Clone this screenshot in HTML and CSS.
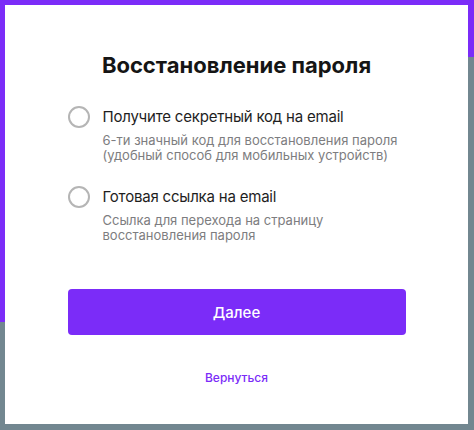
FILE: index.html
```html
<!DOCTYPE html>
<html lang="ru">
<head>
<meta charset="utf-8">
<title>Восстановление пароля</title>
<link rel="stylesheet" href="styles.css">
</head>
<body>
<div class="page">
  <div class="bg-top"></div>
  <div class="bg-left"></div>
  <main class="card">
    <h1 class="title">Восстановление пароля</h1>
    <div class="options">
      <label class="option">
        <span class="radio"></span>
        <span class="option-text">
          <span class="option-label">Получите секретный код на email</span>
          <span class="option-desc">6-ти значный код для восстановления пароля<br>(удобный способ для мобильных устройств)</span>
        </span>
      </label>
      <label class="option">
        <span class="radio"></span>
        <span class="option-text">
          <span class="option-label">Готовая ссылка на email</span>
          <span class="option-desc">Ссылка для перехода на страницу<br>восстановления пароля</span>
        </span>
      </label>
    </div>
    <button class="btn" type="button">Далее</button>
    <a class="back" href="#">Вернуться</a>
  </main>
</div>
</body>
</html>
```
FILE: styles.css
```css
html, body {
  margin: 0;
  padding: 0;
}
body {
  font-family: Inter, "Noto Sans", "DejaVu Sans", sans-serif;
  background: #728790;
}
.page {
  position: relative;
  width: 474px;
  height: 430px;
  overflow: hidden;
  background: #728790;
}
.bg-top {
  position: absolute;
  left: 0;
  top: 0;
  width: 474px;
  height: 57px;
  background: #7b2cf8;
}
.bg-left {
  position: absolute;
  left: 0;
  top: 0;
  width: 40px;
  height: 322px;
  background: #7b2cf8;
  border-bottom-right-radius: 8px;
}
.card {
  position: relative;
  box-sizing: border-box;
  margin: 5px 6px 0 5px;
  height: 419px;
  background: #fff;
  padding-top: 46px;
  display: flex;
  flex-direction: column;
  align-items: center;
}
.title {
  margin: 0;
  font-size: 22px;
  line-height: 28px;
  font-weight: 700;
  color: #151515;
  letter-spacing: 0;
}
.options {
  width: 338px;
  margin-top: 27px;
  display: flex;
  flex-direction: column;
  gap: 23px;
}
.option {
  display: grid;
  grid-template-columns: 22px 1fr;
  column-gap: 13px;
  cursor: pointer;
}
.radio {
  box-sizing: border-box;
  width: 22px;
  height: 22px;
  border: 2px solid #b5b5b5;
  border-radius: 50%;
}
.option-text {
  display: flex;
  flex-direction: column;
}
.option-label {
  font-size: 15px;
  line-height: 22px;
  letter-spacing: -0.2px;
  color: #1e1e1e;
}
.option-desc {
  margin-top: 5px;
  font-size: 13px;
  line-height: 15px;
  color: #7d7d80;
}
.btn {
  margin-top: 46px;
  width: 338px;
  height: 46px;
  border: 0;
  border-radius: 4px;
  background: #7b2cf8;
  color: #fff;
  font-family: inherit;
  font-size: 15px;
  font-weight: 500;
  cursor: pointer;
}
.back {
  margin-top: 33px;
  font-size: 12px;
  line-height: 20px;
  font-weight: 500;
  color: #7b2cf8;
  text-decoration: none;
}
```
